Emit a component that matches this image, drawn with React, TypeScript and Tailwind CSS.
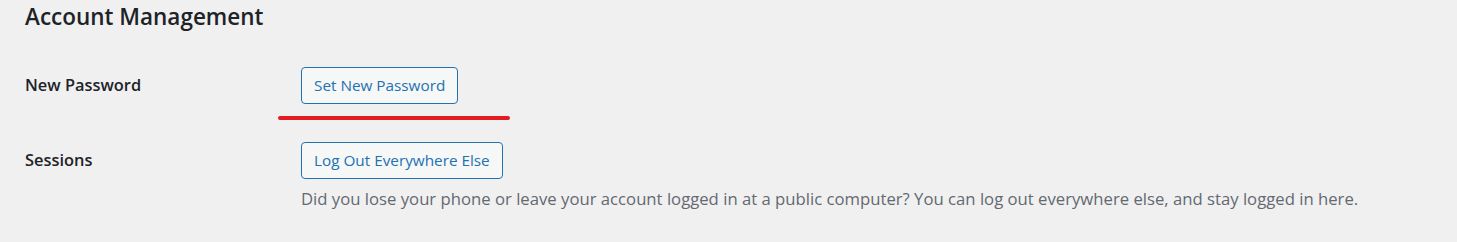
export default function App() {
  return (
    <div className="min-h-screen bg-[#f0f0f1] pl-[25px] pt-[2px] font-['Open_Sans',sans-serif] text-[#1d2327]">
      <h2 className="text-[22.5px] font-semibold leading-[30px]">Account Management</h2>

      <div className="mt-[35px] flex items-center">
        <div className="w-[276px] text-[16.4px] font-semibold">New Password</div>
        <div className="relative">
          <button
            type="button"
            className="h-[37px] rounded-[4px] border border-[#2271b1] bg-[#f6f7f7] px-[12px] text-[15.3px] text-[#2271b1]"
          >
            Set New Password
          </button>
          <span className="absolute left-[-23px] top-[49px] h-[4px] w-[232px] rounded-full bg-[#e31c23]" />
        </div>
      </div>

      <div className="mt-[38px] flex items-start">
        <div className="flex h-[37px] w-[276px] items-center text-[16.4px] font-semibold">Sessions</div>
        <div>
          <button
            type="button"
            className="h-[37px] rounded-[4px] border border-[#2271b1] bg-[#f6f7f7] px-[12px] text-[15.3px] text-[#2271b1]"
          >
            Log Out Everywhere Else
          </button>
          <p className="mt-[7px] text-[16.7px] leading-[26px] text-[#646970]">
            Did you lose your phone or leave your account logged in at a public computer? You can log out everywhere
            else, and stay logged in here.
          </p>
        </div>
      </div>
    </div>
  );
}
